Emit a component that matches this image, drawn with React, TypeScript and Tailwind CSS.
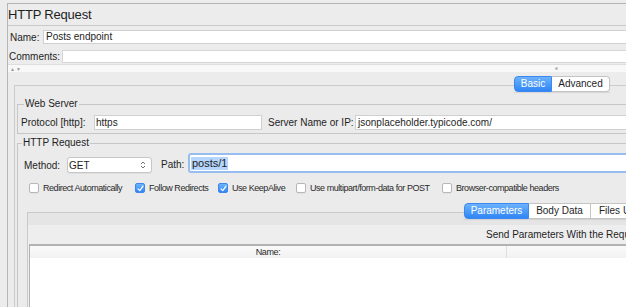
import React from 'react'

function Check({ on }: { on?: boolean }) {
  if (on) {
    return (
      <span className="flex h-[10px] w-[10px] shrink-0 items-center justify-center rounded-[2px] border border-[#3b87ec] bg-gradient-to-b from-[#6db3fb] to-[#2f86f5]">
        <svg width="7" height="7" viewBox="0 0 7 7">
          <path d="M1 3.8 L2.8 5.6 L6 1.2" fill="none" stroke="#fff" strokeWidth="1.2" strokeLinecap="round" strokeLinejoin="round" />
        </svg>
      </span>
    )
  }
  return <span className="h-[10px] w-[10px] shrink-0 rounded-[2px] border border-[#b7b7b7] bg-white shadow-[0_1px_0_rgba(0,0,0,0.04)]" />
}

function CheckItem({ label, on, w }: { label: string; on?: boolean; w: string }) {
  return (
    <div className={`flex items-center gap-[4px] ${w}`}>
      <Check on={on} />
      <span className="whitespace-nowrap text-[9px] leading-[10px] tracking-[-0.45px] text-[#2a2a2a]">{label}</span>
    </div>
  )
}

export default function App() {
  return (
    <div className="h-[307px] w-[626px] overflow-hidden bg-[#ececec] font-['Liberation_Sans',Arial,sans-serif] text-[#1e1e1e]">
      <div className="ml-[7px] mt-[3px] h-[400px] w-[700px] border-l border-t border-[#b4b4b4]">
        {/* title */}
        <div className="h-[22px] border-b border-[#cacaca] text-[13px] leading-[21px] tracking-[-0.2px]">HTTP Request</div>

        {/* name */}
        <div className="mt-[4px] flex h-[14px] items-center pl-[2px]">
          <span className="w-[33px] text-[10px]">Name:</span>
          <div className="h-[14px] flex-1 border border-[#d0d0d0] bg-white pl-[2px] text-[10px] leading-[12px]">Posts endpoint</div>
        </div>

        {/* comments */}
        <div className="mt-[6px] flex h-[13px] items-center pl-[1px]">
          <span className="w-[53px] text-[10px] leading-[13px]">Comments:</span>
          <div className="h-[13px] flex-1 border border-[#d6d6d6] bg-white" />
        </div>

        {/* split divider */}
        <div className="mt-[1px] flex h-[8px] items-center border-t border-[#dedede] bg-[#f8f8f8] pl-[2px]">
          <span className="text-[5px] leading-[6px] tracking-[1px] text-[#9a9a9a]">▲▼</span>
          <span className="ml-[533px] h-[3px] w-[3px] rounded-full bg-[#b9b9b9]" />
        </div>

        {/* basic / advanced pane */}
        <div className="mt-[4px] flex h-[16px] pl-[506px]">
          <div className="relative z-10 flex h-[16px] text-[10px] leading-[14px] shadow-[0_1px_1px_rgba(0,0,0,0.08)]">
            <span className="w-[38px] rounded-l-[4px] border border-[#3d88ee] bg-gradient-to-b from-[#6cb2fb] to-[#2e85f5] text-center text-white">Basic</span>
            <span className="w-[58px] rounded-r-[4px] border border-l-0 border-[#c4c4c4] bg-white text-center">Advanced</span>
          </div>
        </div>
        <div className="-mt-[7px] ml-[6px] border-l border-t border-[#cbcbcb] bg-[#ebebeb] pt-[12px]">
          <fieldset className="ml-[2px] border border-[#c6c6c6] px-[3px] pb-[3px] pt-[5px]">
            <legend className="ml-[3px] px-[1px] text-[10px] leading-[12px]">Web Server</legend>
            <div className="flex h-[15px] items-center">
              <span className="w-[73px] whitespace-nowrap text-[10px]">Protocol [http]:</span>
              <div className="h-[15px] w-[168px] border border-[#d0d0d0] bg-white pl-[1px] text-[10px] leading-[13px]">https</div>
              <span className="ml-[6px] w-[87px] whitespace-nowrap text-[10px]">Server Name or IP:</span>
              <div className="h-[15px] flex-1 border border-[#d0d0d0] bg-white pl-[2px] text-[10px] leading-[13px]">jsonplaceholder.typicode.com/</div>
            </div>
          </fieldset>

          <fieldset className="ml-[2px] mt-[3px] h-[300px] border border-[#c6c6c6]">
            <legend className="ml-[4px] px-[1px] text-[10px] leading-[12px]">HTTP Request</legend>
            <div className="mt-[4px] flex h-[20px] items-end pl-[6px]">
              <span className="flex h-[16px] w-[43px] items-center text-[10px]">Method:</span>
              <div className="flex h-[16px] w-[85px] items-center justify-between rounded-[3px] border border-[#c6c6c6] bg-white pl-[1px] pr-[5px] text-[10px] shadow-[0_1px_0_rgba(0,0,0,0.05)]">
                <span>GET</span>
                <svg width="6" height="10" viewBox="0 0 6 10">
                  <path d="M1 4 L3 2 L5 4 M1 6 L3 8 L5 6" fill="none" stroke="#666" strokeWidth="0.9" />
                </svg>
              </div>
              <span className="ml-[9px] flex h-[18px] w-[27px] items-center text-[10px]">Path:</span>
              <div className="flex h-[20px] flex-1 items-center rounded-[3px] border-2 border-[#97bdf0] bg-white pl-[1px]">
                <span className="bg-[#b5d5fd] px-[1px] text-[11px] leading-[13px]">posts/1</span>
              </div>
            </div>

            <div className="mt-[10px] flex h-[10px] items-center pl-[11px]">
              <CheckItem label="Redirect Automatically" w="w-[106px]" />
              <CheckItem label="Follow Redirects" on w="w-[83px]" />
              <CheckItem label="Use KeepAlive" on w="w-[78px]" />
              <CheckItem label="Use multipart/form-data for POST" w="w-[146px]" />
              <CheckItem label="Browser-compatible headers" w="w-[140px]" />
            </div>

            {/* parameters pane */}
            <div className="mt-[10px] flex h-[16px] pl-[446px]">
              <div className="relative z-10 flex h-[16px] text-[10px] leading-[14px] shadow-[0_1px_1px_rgba(0,0,0,0.08)]">
                <span className="w-[65px] rounded-l-[4px] border border-[#3d88ee] bg-gradient-to-b from-[#6cb2fb] to-[#2e85f5] text-center text-white">Parameters</span>
                <span className="w-[62px] border border-l-0 border-[#c4c4c4] bg-white text-center">Body Data</span>
                <span className="w-[80px] whitespace-nowrap border border-l-0 border-[#c4c4c4] bg-white pl-[8px]">Files Upload</span>
              </div>
            </div>
            <div className="-mt-[7px] ml-[9px] border-l border-t border-[#c9c9c9] bg-[#eeeeee]">
              <div className="h-[12px] bg-[#e5e5e5]" />
              <div className="h-[19px] whitespace-nowrap pl-[458px] text-[10px] leading-[19px]">Send Parameters With the Request:</div>
              <div className="ml-[1px] h-[120px] border-l border-t-2 border-[#b2b2b2] bg-white">
                <div className="flex h-[12px] bg-gradient-to-b from-[#f9f9f9] to-[#f2f2f2]">
                  <div className="w-[477px] border-r border-[#dedede] text-center text-[9px] leading-[12px] tracking-[-0.4px] text-[#2a2a2a]">Name:</div>
                  <div className="flex-1" />
                </div>
              </div>
            </div>
          </fieldset>
        </div>
      </div>
    </div>
  )
}
